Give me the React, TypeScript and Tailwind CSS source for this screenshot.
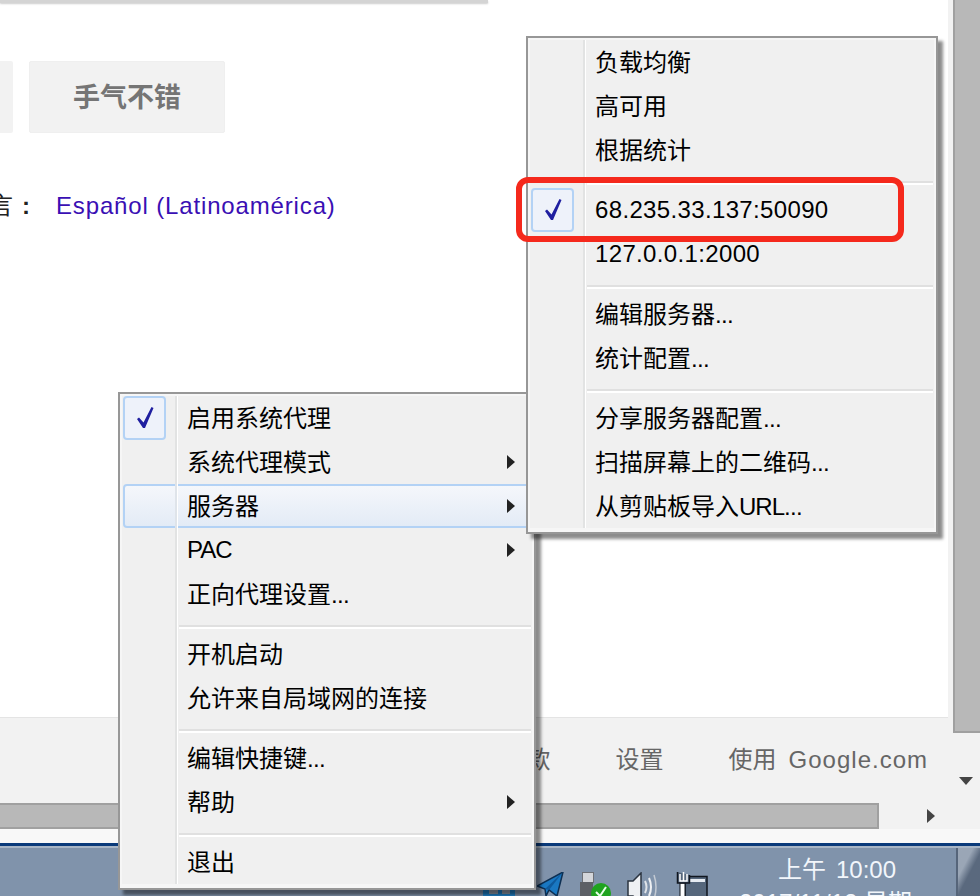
const cjk = "font-['Liberation_Sans','Noto_Sans_CJK_SC',sans-serif]";

type MenuEntry =
    | { type: "sep" }
    | { type: "item"; label: string; checked?: boolean; arrow?: boolean; active?: boolean };

const leftMenu: MenuEntry[] = [
    { type: "item", label: "启用系统代理", checked: true },
    { type: "item", label: "系统代理模式", arrow: true },
    { type: "item", label: "服务器", arrow: true, active: true },
    { type: "item", label: "PAC", arrow: true },
    { type: "item", label: "正向代理设置..." },
    { type: "sep" },
    { type: "item", label: "开机启动" },
    { type: "item", label: "允许来自局域网的连接" },
    { type: "sep" },
    { type: "item", label: "编辑快捷键..." },
    { type: "item", label: "帮助", arrow: true },
    { type: "sep" },
    { type: "item", label: "退出" }
];

const rightMenu: MenuEntry[] = [
    { type: "item", label: "负载均衡" },
    { type: "item", label: "高可用" },
    { type: "item", label: "根据统计" },
    { type: "sep" },
    { type: "item", label: "68.235.33.137:50090", checked: true },
    { type: "item", label: "127.0.0.1:2000" },
    { type: "sep" },
    { type: "item", label: "编辑服务器..." },
    { type: "item", label: "统计配置..." },
    { type: "sep" },
    { type: "item", label: "分享服务器配置..." },
    { type: "item", label: "扫描屏幕上的二维码..." },
    { type: "item", label: "从剪贴板导入URL..." }
];

const Check = () => (
    <svg width="20" height="24" viewBox="0 0 20 24" className="block">
        <path d="M2 13 L4 11.5 L8.5 16.5 L16.5 1 L18.5 2 L10 22 L8 22 Z" fill="#1f1fa0" />
    </svg>
);

const ArrowRight = ({ color = "#222" }: { color?: string }) => (
    <svg width="8" height="14" viewBox="0 0 8 14" className="block">
        <path d="M0 0 L8 7 L0 14 Z" fill={color} />
    </svg>
);

const isLatin = (text: string) => /^[A-Z\d.:]+$/.test(text);

// digits read a little wider in the reference, trailing dots a little narrower
const Label = ({ text }: { text: string }) => {
    if (text === "PAC") return <span className="tracking-[-1px]">{text}</span>;
    if (isLatin(text)) return <span className="tracking-[0.35px]">{text}</span>;
    if (text.endsWith("...")) {
        const head = text.slice(0, -3);
        return (
            <>
                {head.endsWith("URL") ? (
                    <>
                        {head.slice(0, -3)}
                        <span className="tracking-[-1px]">URL</span>
                    </>
                ) : (
                    head
                )}
                <span className="tracking-[-0.7px]">...</span>
            </>
        );
    }
    return <>{text}</>;
};

const Menu = ({ items, className }: { items: MenuEntry[]; className: string }) => (
    <div
        className={`absolute border-2 border-[#979797] bg-[#f6f6f6] p-[2px] pb-[4px] shadow-[5px_5px_3px_rgba(0,0,0,0.45)] ${cjk} ${className}`}
    >
        <div className="flex flex-col bg-[#f0f0f0]">
            {items.map((entry, i) =>
                entry.type === "sep" ? (
                    <div key={i} className="flex h-4">
                        <div className="w-[53px] shrink-0" />
                        <div className="h-full w-[3px] shrink-0 border-r border-white bg-[#e2e3e3]" />
                        <div className="ml-[1px] flex-1 pr-[1px] pt-[9px]">
                            <div className="h-[2px] bg-[#e0e0e0]" />
                            <div className="h-[2px] bg-white" />
                        </div>
                    </div>
                ) : (
                    <div
                        key={i}
                        className={`relative flex h-11 items-center text-[24px] text-black ${
                            entry.active
                                ? "ml-[1px] rounded-[4px] border-2 border-[#b3d2f5] bg-gradient-to-b from-[#f5f7fb] to-[#e3ebf6]"
                                : "border-2 border-transparent"
                        }`}
                    >
                        {entry.checked ? (
                            <div className="-my-[2px] -ml-[1px] mr-[9px] flex h-11 w-[43px] shrink-0 items-center justify-center rounded-[4px] border-2 border-[#b3d2f5] bg-[#eef2fa]">
                                <Check />
                            </div>
                        ) : (
                            <div className={`shrink-0 ${entry.active ? "w-[50px]" : "w-[51px]"}`} />
                        )}
                        <div
                            className={`-my-[2px] h-[44px] w-[3px] shrink-0 border-r border-white ${
                                entry.active ? "bg-[#dfe4ea]" : "bg-[#e2e3e3]"
                            }`}
                        />
                        <span className={`ml-[9px] flex-1 whitespace-nowrap ${isLatin(entry.label) ? "" : "pt-[2px]"}`}>
                            <Label text={entry.label} />
                        </span>
                        {entry.arrow && (
                            <span className="mr-[15px]">
                                <ArrowRight />
                            </span>
                        )}
                    </div>
                )
            )}
        </div>
    </div>
);

const TrayHidden = () => (
    <svg width="32" height="6" viewBox="0 0 32 6" className="block">
        <rect x="0" y="0" width="32" height="6" fill="#1f7fc4" />
        <rect x="6" y="0" width="9" height="4" fill="#8e9aa8" />
        <rect x="19" y="0" width="8" height="4" fill="#8e9aa8" />
    </svg>
);

const TrayPlane = () => (
    <svg width="27" height="24" viewBox="0 0 27 24" className="block">
        <path d="M0 14 L26 0 L20 24 L12 18 L9 24 L8 17 Z" fill="#1a78c2" stroke="#0d2f52" strokeWidth="1.5" />
        <path d="M8 17 L26 0 L12 18" fill="#0f5a9c" />
    </svg>
);

const TrayUsb = () => (
    <svg width="32" height="24" viewBox="0 0 32 24" className="block">
        <rect x="2.5" y="0.5" width="11" height="10" fill="#d4d6da" stroke="#6c6f75" />
        <rect x="0" y="10" width="13" height="14" fill="#5d6066" />
        <circle cx="21" cy="21" r="10" fill="#1fa31f" />
        <path d="M16 20 L20 24 L26 15" fill="none" stroke="#e8ffe8" strokeWidth="2" />
    </svg>
);

const TraySpeaker = () => (
    <svg width="32" height="24" viewBox="0 0 32 24" className="block">
        <path d="M1 9 H6 L14 1 V30 L6 24 H1 Z" fill="#eef0f3" stroke="#2b3440" strokeWidth="1.5" />
        <path d="M18 9 Q21 15 18 21" fill="none" stroke="#dfe3e8" strokeWidth="2" />
        <path d="M22 6 Q26 15 22 24" fill="none" stroke="#eef0f3" strokeWidth="2" />
        <path d="M27 3 Q31 15 27 27" fill="none" stroke="#c3cad3" strokeWidth="1.5" />
    </svg>
);

const TrayNetwork = () => (
    <svg width="32" height="25" viewBox="0 0 32 25" className="block">
        <rect x="9" y="5.5" width="22" height="22" fill="#56677c" stroke="#10161f" strokeWidth="1.5" />
        <rect x="12" y="8" width="17" height="3" fill="#e6ebf1" />
        <rect x="4" y="12" width="5" height="14" fill="#ffffff" stroke="#10161f" />
        <path d="M1.5 1 V12 H13.5 V4" fill="#56677c" stroke="#10161f" strokeWidth="1.5" />
        <path d="M4 3 V10 H11 V3 M7.5 1 V10" fill="none" stroke="#ffffff" strokeWidth="1.5" />
    </svg>
);

export default function App() {
    return (
        <div className={`relative flex h-[896px] w-[980px] flex-col overflow-hidden bg-white ${cjk}`}>
            <div className="flex h-[803px]">
                <div className="flex w-[948px] flex-col">
                    <main className="h-[717px] bg-white">
                        <div className="h-[3px] w-[488px] bg-[#d4d4d4] shadow-[0_1px_2px_rgba(0,0,0,0.2)]" />
                        <div className="mt-[58px] flex gap-4">
                            <div className="h-[72px] w-[13px] rounded-r-[2px] bg-[#f2f2f2]" />
                            <div className="flex h-[72px] w-[196px] items-center justify-center rounded-[2px] border border-[#efefef] bg-[#f2f2f2] pt-[3px] text-[27px] font-bold text-[#757575]">
                                手气不错
                            </div>
                        </div>
                        <div className="mt-[57px] flex h-[32px] items-center text-[24px] leading-none">
                            <span className="-ml-[11px] text-[#222]">言</span>
                            <span className="ml-[9px] w-[34px] font-bold text-[#222]">:</span>
                            <span className="tracking-[0.85px] text-[#3a0fb4]">Español (Latinoamérica)</span>
                        </div>
                    </main>
                    <footer className="flex h-[86px] items-start justify-end border-t border-[#e4e4e4] bg-[#f2f2f2] pr-[20px] pt-[26px] text-[24px] leading-8 text-[#666]">
                        <span>款</span>
                        <span className="ml-[65px]">设置</span>
                        <span className="ml-[65px]">使用</span>
                        <span className="ml-[12px] tracking-[1px]">Google.com</span>
                    </footer>
                </div>
                <div className="flex w-[32px] flex-col bg-[#f2f2f2] pl-[5px]">
                    <div className="h-[733px] border-b-2 border-l-2 border-[#a0a0a0] bg-[#b8b8b8]" />
                    <svg width="14" height="8" viewBox="0 0 14 8" className="ml-[6px] mt-[44px] block">
                        <path d="M0 0 H14 L7 8 Z" fill="#444" />
                    </svg>
                </div>
            </div>

            <div className="flex h-[26px] items-center bg-[#f2f2f2]">
                <div className="h-full w-[879px] border-y-2 border-r-2 border-[#a0a0a0] bg-[#b8b8b8]" />
                <span className="ml-[48px]">
                    <ArrowRight color="#444" />
                </span>
            </div>
            <div className="h-[14px] bg-[#f8f8f8]" />
            <div className="h-[3px] bg-[#0a3a7a]" />
            <div className="h-[2px] bg-[#a9b6c6]" />

            <div className="flex flex-1 items-start overflow-hidden bg-[#8093ab]">
                <div className="ml-[483px] mt-[42px] shrink-0">
                    <TrayHidden />
                </div>
                <div className="ml-[22px] mt-[24px] shrink-0">
                    <TrayPlane />
                </div>
                <div className="ml-[16px] mt-[24px] shrink-0">
                    <TrayUsb />
                </div>
                <div className="ml-[15px] mt-[24px] shrink-0">
                    <TraySpeaker />
                </div>
                <div className="ml-[17px] mt-[23px] shrink-0">
                    <TrayNetwork />
                </div>
                <div className="ml-[70px] mt-[6px] w-[178px] shrink-0 whitespace-nowrap text-[24px] leading-8 text-[#f2f6fb]">
                    <div className="flex gap-[10px]">
                        <span>上午</span>
                        <span>10:00</span>
                    </div>
                    <div className="-ml-[39px] mt-[1px]">2017/11/12 星期</div>
                </div>
                <div className="ml-auto h-full w-[27px] shrink-0 border-l-2 border-[#56657a] bg-gradient-to-br from-[#9aa6b6] from-30% to-[#5a697e] to-50%" />
            </div>

            <Menu items={leftMenu} className="left-[118px] top-[392px] w-[418px]" />
            <Menu items={rightMenu} className="left-[526px] top-[36px] w-[412px]" />
            <div className="absolute left-[516px] top-[177px] h-[65px] w-[388px] rounded-[12px] border-[6px] border-[#f5291c]" />
        </div>
    );
}
